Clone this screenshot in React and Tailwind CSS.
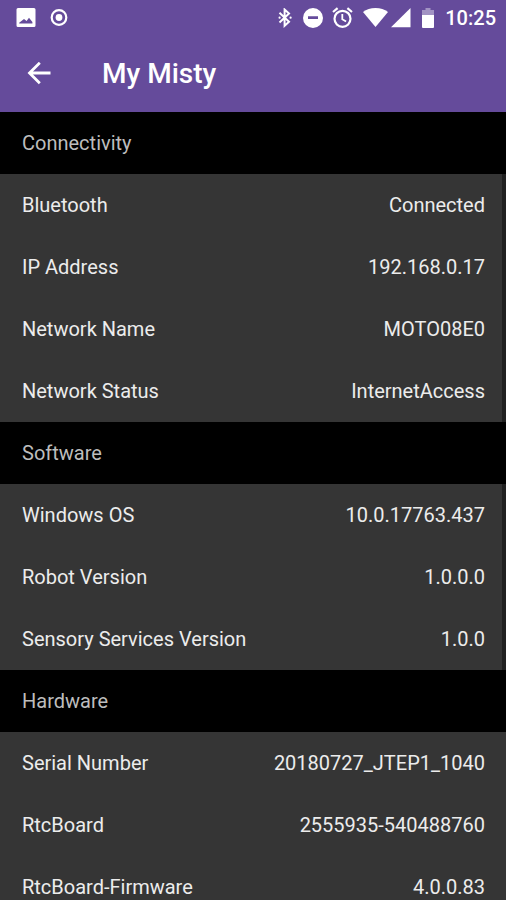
import React from "react";

const sections = [
  {
    title: "Connectivity",
    edged: true,
    rows: [
      ["Bluetooth", "Connected"],
      ["IP Address", "192.168.0.17"],
      ["Network Name", "MOTO08E0"],
      ["Network Status", "InternetAccess"],
    ],
  },
  {
    title: "Software",
    edged: true,
    rows: [
      ["Windows OS", "10.0.17763.437"],
      ["Robot Version", "1.0.0.0"],
      ["Sensory Services Version", "1.0.0"],
    ],
  },
  {
    title: "Hardware",
    edged: false,
    rows: [
      ["Serial Number", "20180727_JTEP1_1040"],
      ["RtcBoard", "2555935-540488760"],
      ["RtcBoard-Firmware", "4.0.0.83"],
    ],
  },
];

function StatusBar() {
  return (
    <div className="flex h-9 items-center justify-between pr-[10px] pl-4">
      <div className="flex items-center gap-[14px]">
        <svg className="h-5 w-5" viewBox="0 0 20 20" fill="currentColor" aria-hidden="true">
          <path
            fillRule="evenodd"
            d="M2 0h16a1.5 1.5 0 0 1 1.5 1.5v16a1.5 1.5 0 0 1-1.5 1.5H2a1.5 1.5 0 0 1-1.5-1.5V1.500A1.5 1.5 0 0 1 2 0zM3.2 15.500h13.2v-1.500l-3.400-4.200-2.400 3.200-2.600-2-4.800 3.800z"
          />
        </svg>
        <svg className="h-[18px] w-[18px]" viewBox="0 0 18 18" fill="none" stroke="currentColor" aria-hidden="true">
          <circle cx="9" cy="8.500" r="7.3" strokeWidth="2.2" />
          <circle cx="9" cy="8.500" r="3.4" fill="currentColor" stroke="none" />
        </svg>
      </div>
      <div className="flex items-center">
        <svg className="mr-[11px] h-5 w-[14px]" viewBox="0 0 14 20" fill="none" stroke="currentColor" strokeWidth="2" aria-hidden="true">
          <path d="M1.500 4.800L11 13.800l-4.400 4V1.500L11 5.500 1.500 14.500" />
          <circle cx="1.6" cy="9.700" r="1.1" fill="currentColor" stroke="none" />
          <circle cx="12.6" cy="9.700" r="1.1" fill="currentColor" stroke="none" />
        </svg>
        <svg className="mr-[9px] h-5 w-5" viewBox="0 0 20 20" fill="currentColor" aria-hidden="true">
          <path fillRule="evenodd" d="M10 0a10 10 0 1 0 0 20a10 10 0 0 0 0-20zM5 8.200h10v2.8H5z" />
        </svg>
        <svg className="mr-[10px] h-[22px] w-[21px]" viewBox="0 0 21 22" fill="none" stroke="currentColor" aria-hidden="true">
          <circle cx="10.5" cy="11.800" r="8" strokeWidth="2.2" />
          <path d="M10.3 7v5.200l3.8 2.4" strokeWidth="1.8" />
          <path d="M1 5L5.600 1.200M20 5L15.400 1.200" strokeWidth="2.2" />
        </svg>
        <svg className="mr-[3px] h-5 w-[25px]" viewBox="0 0 25 20" fill="currentColor" aria-hidden="true">
          <path d="M12.5 19L0 4C3.4 1.200 7.6 0 12.5 0S21.6 1.200 25 4z" />
        </svg>
        <svg className="mr-[11px] h-5 w-5" viewBox="0 0 20 20" fill="currentColor" aria-hidden="true">
          <path d="M19.5 0v19.200H0z" />
        </svg>
        <svg className="mr-[11px] h-5 w-3" viewBox="0 0 12 20" fill="currentColor" aria-hidden="true">
          <path opacity="0.4" d="M3.5 0h5v2H12v5H0V2h3.500z" />
          <path d="M0 7h12v12a1 1 0 0 1-1 1H1a1 1 0 0 1-1-1z" />
        </svg>
        <time className="text-xl leading-6 font-medium">10:25</time>
      </div>
    </div>
  );
}

export default function App() {
  return (
    <div className="flex h-screen flex-col overflow-hidden bg-[#353535] font-['Roboto','Liberation_Sans',sans-serif] text-[#ececec]">
      <header className="shrink-0 bg-[#654b9b] text-white">
        <StatusBar />
        <div className="flex h-[76px] items-center pl-[27px]">
          <button type="button" aria-label="Back" className="mr-[51px]">
            <svg className="h-6 w-6" viewBox="0 0 24 24" fill="none" stroke="currentColor" strokeWidth="2.800" aria-hidden="true">
              <path d="M23.500 11H2.500M12.800 0.800L2.500 11l10.300 10.200" />
            </svg>
          </button>
          <h1 className="text-[28px] leading-9 font-medium">My Misty</h1>
        </div>
      </header>
      <main className="min-h-0 flex-1 overflow-hidden">
        {sections.map((section) => (
          <section key={section.title}>
            <h2 className="flex h-[62px] items-center bg-black px-[22px] text-xl text-[#bdbdbd]">
              {section.title}
            </h2>
            <dl className={section.edged ? "border-r-4 border-[#212121] pr-[17px]" : "pr-[21px]"}>
              {section.rows.map(([label, value]) => (
                <div key={label} className="flex h-[62px] items-center justify-between pl-[22px] text-xl">
                  <dt>{label}</dt>
                  <dd>{value}</dd>
                </div>
              ))}
            </dl>
          </section>
        ))}
      </main>
    </div>
  );
}
